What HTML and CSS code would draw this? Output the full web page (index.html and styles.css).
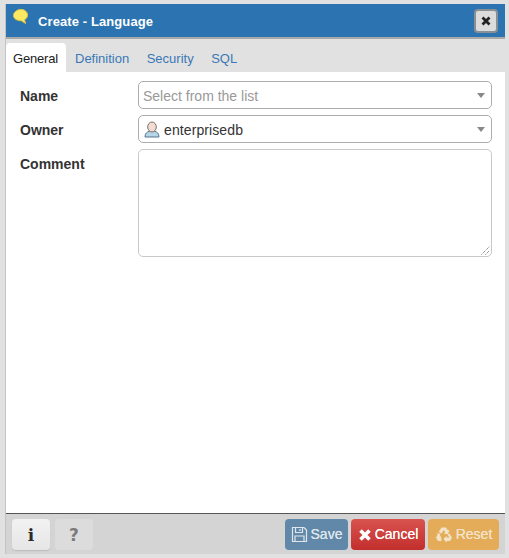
FILE: index.html
```html
<!DOCTYPE html>
<html lang="en">
<head>
<meta charset="utf-8">
<title>Create - Language</title>
<link rel="stylesheet" href="styles.css">
</head>
<body>
<div class="dialog">
  <header class="titlebar">
    <svg class="title-icon" width="18" height="18" viewBox="0 0 18 18"><path d="M8 1.500C12 1 15.500 3.500 15.500 7C15.500 9.500 14 11 12.500 11.500L13.500 15.500L9.500 12.800C5.500 12.800 1.500 11 1.500 7.500C1.500 4.500 4.500 2 8 1.500Z" fill="#fbe863" stroke="#e6c63c" stroke-width="1"/></svg>
    <span class="title-text">Create - Language</span>
    <button class="close-btn" type="button"><svg width="10" height="10" viewBox="0 0 10 10"><path d="M1.500 1.500L8.500 8.500M8.500 1.500L1.500 8.500" stroke="#222" stroke-width="2.800"/></svg></button>
  </header>
  <nav class="tabs">
    <span class="tab active">General</span>
    <span class="tab">Definition</span>
    <span class="tab">Security</span>
    <span class="tab">SQL</span>
  </nav>
  <main class="body">
    <div class="row">
      <label class="label">Name</label>
      <div class="select placeholder"><span class="select-text">Select from the list</span><i class="caret"></i></div>
    </div>
    <div class="row">
      <label class="label">Owner</label>
      <div class="select"><svg class="user-icon" width="16" height="17" viewBox="0 0 16 17"><path d="M1 16C1 12.500 3 10.800 5.500 10.200L10.500 10.200C13 10.800 15 12.500 15 16Z" fill="#b5d6e8" stroke="#55768c" stroke-width="1"/><ellipse cx="8" cy="6" rx="4.300" ry="5" fill="#f3ddd2" stroke="#7d6f6a" stroke-width="1"/></svg><span class="select-text owner-text">enterprisedb</span><i class="caret"></i></div>
    </div>
    <div class="row">
      <label class="label">Comment</label>
      <div class="textarea"><svg class="grip" width="9" height="9" viewBox="0 0 9 9"><path d="M0.500 8.500L8.500 0.500M4.500 8.500L8.500 4.500" stroke="#666" stroke-width="1" stroke-dasharray="1 1"/></svg></div>
    </div>
  </main>
  <footer class="footer">
    <div class="btn-group">
      <button class="btn btn-icon" type="button">i</button>
      <button class="btn btn-icon disabled" type="button">?</button>
    </div>
    <div class="btn-group right">
      <button class="btn btn-save" type="button"><svg width="17" height="17" viewBox="0 0 17 17" fill="none" stroke="#dfe6ec" stroke-width="1.200"><path d="M1.500 1.500H13L15.500 4V15.500H1.500Z"/><path d="M4.500 1.500V6.500H11.500V1.500M9 3V5M4 15.500V10H13V15.500"/></svg><span class="btn-label">Save</span></button>
      <button class="btn btn-cancel" type="button"><svg width="14" height="14" viewBox="0 0 14 14"><path d="M2.500 2.500L11.500 11.500M11.500 2.500L2.500 11.500" stroke="#fff" stroke-width="3.600"/></svg><span class="btn-label">Cancel</span></button>
      <button class="btn btn-reset" type="button"><svg width="18" height="17" viewBox="0 0 18 17" fill="#f3e3c6"><path d="M6.500 1.500H11L13 4.500L14.500 3.700L13 8.200L8.700 7.500L10.300 6.600L8.800 4L6.500 7.500L3.800 5.800Z"/><path d="M14.500 7.500L17 11.800L15 15H11.500V16.800L8.500 13L11.500 9.800V11.500H14.500L12.500 8.700Z"/><path d="M1.500 7L6 7.800L4.600 8.700L6.300 11.500V15H3L1 11.800L2.800 8Z"/></svg><span class="btn-label">Reset</span></button>
    </div>
  </footer>
</div>
</body>
</html>
```

FILE: styles.css
```css
* { box-sizing: border-box; }
html, body { height: 100%; }
body {
  margin: 0;
  padding: 4px 4px 4px 5px;
  background: #e1e1e1;
  font-family: "Liberation Sans", Arial, sans-serif;
  font-size: 14px;
  color: #333;
  overflow: hidden;
}
.dialog {
  display: flex;
  flex-direction: column;
  height: 550px;
  border-left: 1px solid #c4c4c4;
  background: #fff;
}
.titlebar {
  display: flex;
  align-items: center;
  height: 35px;
  padding: 0 7px 0 6px;
  background: #2b74b1;
  border-bottom: 2px solid #a9a9a9;
  color: #fff;
}
.title-icon { margin-top: -7px; margin-right: 8px; }
.title-text {
  flex: 1;
  margin-top: 2px;
  font-size: 13px;
  font-weight: 700;
  letter-spacing: 0.1px;
}
.close-btn {
  display: flex;
  align-items: center;
  justify-content: center;
  width: 24px;
  height: 24px;
  padding: 0;
  border: 2px solid #8a8f94;
  border-radius: 4px;
  background: #dcdcdc;
}
.tabs {
  display: flex;
  height: 33px;
  padding-top: 4px;
  background: #e1e1e1;
}
.tab {
  padding: 8px 8.500px 0 8px;
  margin-right: 1px;
  font-size: 13px;
  color: #3a78b5;
}
.tab.active {
  width: 60px;
  padding-left: 7px;
  padding-right: 0;
  background: #fff;
  color: #222;
  letter-spacing: -0.2px;
  border-radius: 4px 4px 0 0;
}
.body {
  flex: 1;
  display: flex;
  flex-direction: column;
  gap: 6px;
  padding: 9px 13px 0 14px;
  background: #fff;
}
.row { display: flex; align-items: flex-start; }
.label {
  width: 118px;
  flex: none;
  padding-top: 7px;
  font-weight: 700;
  color: #333;
}
.select {
  position: relative;
  display: flex;
  align-items: center;
  flex: 1;
  height: 28px;
  padding: 0 5px;
  border: 1px solid #acacac;
  border-radius: 5px;
  background: #fff;
}
.select.placeholder { padding-left: 4px; }
.select-text { padding-top: 2px; font-size: 14px; color: #333; }
.owner-text { letter-spacing: 0.1px; }
.placeholder .select-text { color: #999; }
.user-icon { margin-right: 4px; }
.caret {
  position: absolute;
  right: 6px;
  top: 11px;
  border-left: 4px solid transparent;
  border-right: 4px solid transparent;
  border-top: 5px solid #888;
}
.textarea {
  position: relative;
  flex: 1;
  height: 108px;
  border: 1px solid #c9c9c9;
  border-radius: 5px;
  background: #fff;
}
.grip { position: absolute; right: 1px; bottom: 1px; }
.footer {
  display: flex;
  justify-content: space-between;
  align-items: flex-start;
  height: 41px;
  padding: 5px 6px 0 6px;
  background: #d4d4d4;
  border-top: 1px solid #555;
}
.btn-group { display: flex; gap: 5px; }
.btn-group.right { gap: 3px; }
.btn {
  display: flex;
  align-items: center;
  justify-content: center;
  gap: 3px;
  height: 31px;
  padding: 0;
  border: 0;
  border-radius: 4px;
  font-family: inherit;
  font-size: 14px;
}
.btn-label { margin-top: -1px; text-shadow: 0 0 0.6px currentColor; }
.btn-icon {
  width: 38px;
  background: linear-gradient(#f2f2f2, #e6e6e6);
  font-family: "DejaVu Serif", serif;
  font-size: 17px;
  font-weight: 700;
  color: #2a2a2a;
  box-shadow: 0 1px 1px #bbb;
}
.btn-icon.disabled {
  background: #dcdcdc;
  font-family: "DejaVu Sans", sans-serif;
  color: #7b7b7b;
  box-shadow: none;
}
.btn-save { width: 63px; background: #6188a9; color: #dfe6ec; }
.btn-cancel { width: 74px; background: linear-gradient(#d9534f, #c22f2d); color: #fff; }
.btn-reset { width: 71px; background: #e4ac59; color: #f3e3c6; }
```
